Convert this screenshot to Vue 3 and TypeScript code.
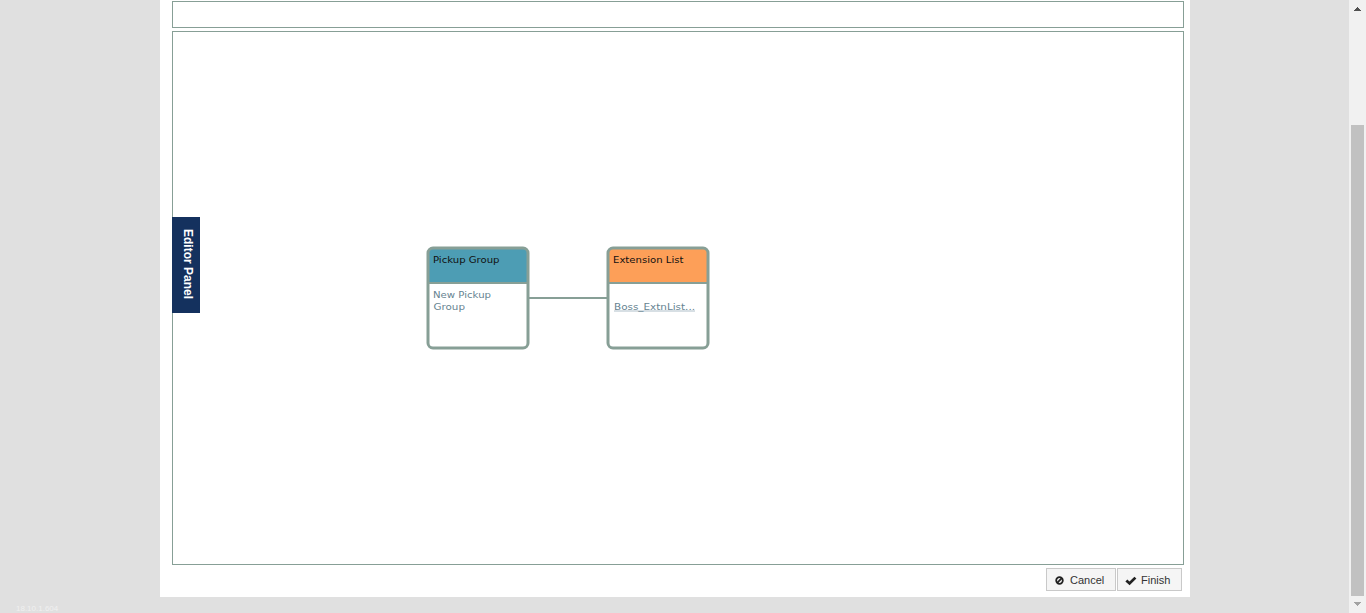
<script setup lang="ts">
interface DiagramNode {
  id: string
  title: string
  titleWidth: number
  fill: string
  x: number
  lines: { text: string; x: number; y: number; width: number; link?: boolean }[]
}

const nodes: DiagramNode[] = [
  {
    id: 'pickup',
    title: 'Pickup Group',
    titleWidth: 66.5,
    fill: '#4d9db4',
    x: 428,
    lines: [
      { text: 'New Pickup', x: 5, y: 50, width: 58 },
      { text: 'Group', x: 5.5, y: 62, width: 31.5 },
    ],
  },
  {
    id: 'extension',
    title: 'Extension List',
    titleWidth: 70.5,
    fill: '#fd9f58',
    x: 608,
    lines: [{ text: 'Boss_ExtnList...', x: 6, y: 62, width: 81, link: true }],
  },
]
</script>

<template>
  <div class="viewport">
    <div class="backdrop">
      <span class="version">18.10.1.604</span>
      <main class="sheet">
        <div class="toolbar"></div>
        <div class="canvas">
          <svg class="diagram" width="1010" height="532" viewBox="173 32 1010 532">
            <path d="M529 298H608" stroke="#879f96" stroke-width="2" />
            <g v-for="n in nodes" :key="n.id" :transform="`translate(${n.x} 248)`">
              <rect width="100" height="100" rx="5" fill="#fff" />
              <path d="M0 35V5a5 5 0 0 1 5-5h90a5 5 0 0 1 5 5v30z" :fill="n.fill" />
              <path d="M0 35H100" stroke="#879f96" stroke-width="2" />
              <rect width="100" height="100" rx="5" fill="none" stroke="#879f96" stroke-width="3" />
              <text class="title" x="5" y="15" :textLength="n.titleWidth" lengthAdjust="spacingAndGlyphs">{{ n.title }}</text>
              <template v-for="l in n.lines" :key="l.text">
                <rect v-if="l.link" :x="l.x" :y="l.y" :width="l.width" height="2" fill="#d7dfe4" />
                <text class="body" :x="l.x" :y="l.y" :textLength="l.width" lengthAdjust="spacingAndGlyphs">{{ l.text }}</text>
              </template>
            </g>
          </svg>
          <div class="editor-tab"><span>Editor Panel</span></div>
        </div>
        <div class="actions">
          <button class="btn cancel">
            <svg width="9" height="10" viewBox="0 0 9 10" fill="none" stroke="#222" stroke-width="1.8">
              <circle cx="4.5" cy="5.5" r="3.3" />
              <path d="M2.2 7.8L6.8 3.2" />
            </svg>
            Cancel
          </button>
          <button class="btn finish">
            <svg width="12" height="12" viewBox="0 0 12 12" fill="#222">
              <path d="M0.4 7.5L2.3 5.6L4.5 7.6L9.4 2.7L11.4 4.5L4.6 11.3z" />
            </svg>
            Finish
          </button>
        </div>
      </main>
    </div>
    <div class="scrollbar">
      <svg class="arrow" width="7" height="4" viewBox="0 0 7 4" shape-rendering="crispEdges">
        <path d="M3 0h1v1h1v1h1v1h1v1H0V3h1V2h1V1h1z" fill="#505050" />
      </svg>
      <div class="thumb"></div>
      <svg class="arrow" width="7" height="4" viewBox="0 0 7 4" shape-rendering="crispEdges">
        <path d="M0 0h7v1H6v1H5v1H4v1H3V3H2V2H1V1H0z" fill="#a3a3a3" />
      </svg>
    </div>
  </div>
</template>

<style>
body {
  margin: 0;
  overflow: hidden;
}
</style>

<style scoped>
* {
  box-sizing: border-box;
}
.viewport {
  display: flex;
  width: 1366px;
  height: 613px;
  overflow: hidden;
  font-family: "Liberation Sans", Arial, sans-serif;
}
.backdrop {
  position: relative;
  width: 1349px;
  height: 613px;
  padding-left: 160px;
  background: #e0e0e0;
}
.version {
  position: absolute;
  left: 16px;
  top: 604px;
  font-size: 8px;
  line-height: 10px;
  color: #f0f0f0;
}
.sheet {
  width: 1030px;
  height: 597px;
  padding: 1px 6px 0 12px;
  background: #fff;
}
.toolbar {
  height: 27px;
  margin-bottom: 3px;
  border: 1px solid #879f96;
}
.canvas {
  position: relative;
  height: 534px;
  border: 1px solid #879f96;
}
.diagram {
  display: block;
}
.title,
.body {
  font-family: "DejaVu Sans", Verdana, sans-serif;
  font-size: 9.5px;
}
.title {
  fill: #111;
}
.body {
  fill: #668391;
}
.editor-tab {
  position: absolute;
  left: -1px;
  top: 185px;
  width: 28px;
  height: 96px;
  padding: 12px 0 0 4px;
  background: #14315e;
  color: #fff;
  font-size: 12px;
  font-weight: bold;
  line-height: 24px;
  writing-mode: vertical-rl;
}
.actions {
  display: flex;
  justify-content: flex-end;
  gap: 1px;
  padding: 3px 2px 0 0;
}
.btn {
  display: flex;
  align-items: center;
  height: 23px;
  padding: 0 0 0 8px;
  border: 1px solid #c9c9c9;
  background: #f5f5f5;
  color: #333;
  font-family: inherit;
  font-size: 11px;
}
.cancel {
  width: 70px;
  gap: 6px;
}
.finish {
  width: 65px;
  padding-left: 7px;
  gap: 4px;
}
.scrollbar {
  width: 17px;
  height: 613px;
  padding-top: 7px;
  background: #f1f1f1;
}
.arrow {
  display: block;
  margin-left: 5px;
}
.thumb {
  width: 13px;
  height: 471px;
  margin: 114px 0 6px 2px;
  background: #c1c1c1;
}
</style>
